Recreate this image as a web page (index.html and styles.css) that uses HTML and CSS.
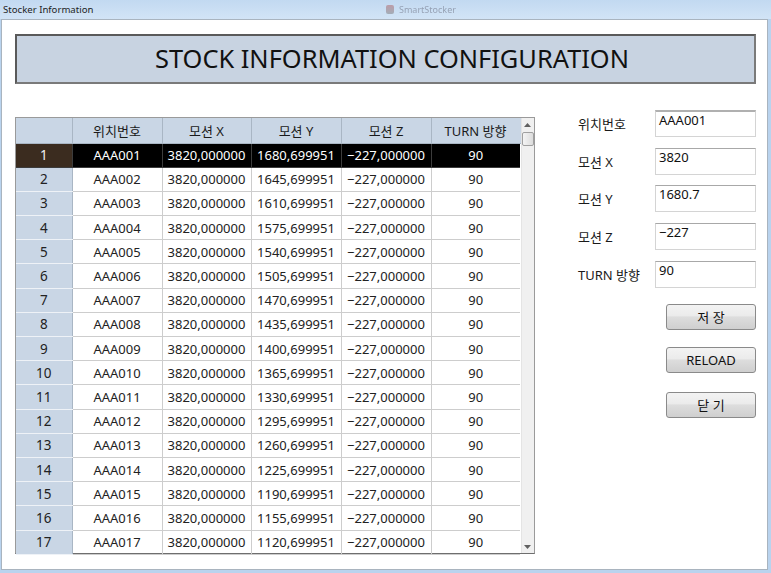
FILE: index.html
```html
<!DOCTYPE html>
<html>
<head>
<meta charset="utf-8">
<link rel="stylesheet" href="styles.css">
</head>
<body>
<div class="titlebar">
  <span class="title">Stocker Information</span>
  <span class="ghost"><span class="ghost-icon"></span><span class="ghost-text">SmartStocker</span></span>
</div>
<div class="window">
  <div class="banner">STOCK INFORMATION CONFIGURATION</div>
  <div class="content">
    <div class="grid-wrap">
      <table class="grid">
        <colgroup>
          <col class="c-rh"><col class="c1"><col class="c2"><col class="c3"><col class="c4"><col class="c5">
        </colgroup>
        <thead>
          <tr><th class="rh"></th><th>위치번호</th><th>모션 X</th><th>모션 Y</th><th>모션 Z</th><th>TURN 방향</th></tr>
        </thead>
        <tbody id="rows"></tbody>
      </table>
      <div class="scrollbar">
        <div class="sb-up"><svg width="7" height="4" viewBox="0 0 7 4"><path d="M0 4 L3.5 0 L7 4 Z" fill="#606060"/></svg></div>
        <div class="sb-thumb"></div>
        <div class="sb-track"></div>
        <div class="sb-down"><svg width="7" height="4" viewBox="0 0 7 4"><path d="M0 0 L3.5 4 L7 0 Z" fill="#606060"/></svg></div>
      </div>
    </div>
    <div class="side">
      <div class="form">
        <label>위치번호</label><div class="input first">AAA001</div>
        <label>모션 X</label><div class="input">3820</div>
        <label>모션 Y</label><div class="input">1680.7</div>
        <label>모션 Z</label><div class="input">−227</div>
        <label>TURN 방향</label><div class="input">90</div>
      </div>
      <div class="buttons">
        <button class="btn">저 장</button>
        <button class="btn">RELOAD</button>
        <button class="btn b3">닫 기</button>
      </div>
    </div>
  </div>
</div>
<script>
  var tb = document.getElementById('rows');
  var html = '';
  for (var i = 1; i <= 17; i++) {
    var n = ('00' + i).slice(-3);
    var y = (1715 - 35 * i) + ',699951';
    html += '<tr' + (i === 1 ? ' class="sel"' : '') + '><td class="rh">' + i + '</td><td>AAA' + n + '</td><td>3820,000000</td><td>' + y + '</td><td>\u2212227,000000</td><td>90</td></tr>';
  }
  tb.innerHTML = html;
</script>
</body>
</html>
```
FILE: styles.css
```css
* { box-sizing: border-box; }
html, body { margin: 0; padding: 0; }
body {
  width: 771px;
  height: 573px;
  overflow: hidden;
  background: #b9d3ee;
  font-family: "Noto Sans", "Noto Sans CJK KR", sans-serif;
  color: #1a1a1a;
}
.titlebar {
  height: 19px;
  display: flex;
  align-items: center;
  background: linear-gradient(to bottom, #c2d9f1, #d2e4f6);
  position: relative;
}
.title {
  font-size: 9.6px;
  color: #1e1e1e;
  padding-left: 3px;
  line-height: 1;
}
.ghost {
  position: absolute;
  left: 386px;
  top: 3px;
  display: flex;
  align-items: center;
  gap: 5px;
  opacity: 0.45;
}
.ghost-icon {
  width: 8px; height: 9px;
  background: linear-gradient(#b05050, #707070);
  border-radius: 2px;
}
.ghost-text { font-size: 9px; color: #556; filter: blur(0.6px); }

.window {
  margin-left: 1px;
  width: 767px;
  height: 551px;
  background: #ffffff;
  border: 1px solid #a9b4bf;
  padding: 14px 0 0 13px;
}
.banner {
  width: 741px;
  height: 50px;
  border: 2px solid #5a5a5a;
  border-right-color: #7a7a7a;
  border-bottom-color: #7a7a7a;
  background: #c8d3e1;
  display: flex;
  align-items: center;
  justify-content: center;
  font-size: 25.4px;
  color: #111;
  padding-left: 13px;
  padding-bottom: 2px;
}
.content {
  display: flex;
  margin-top: 26px;
}
.grid-wrap {
  margin-top: 7px;
  display: flex;
  width: 520px;
  height: 437px;
  border: 1px solid #9a9a9a;
  border-bottom-color: #6e6e6e;
}
.grid {
  border-collapse: collapse;
  table-layout: fixed;
  width: 504px;
  font-size: 13px;
}
.c-rh { width: 56px; }
.c1 { width: 90px; }
.c2 { width: 89px; }
.c3 { width: 90px; }
.c4 { width: 90px; }
.c5 { width: 89px; }
.grid th {
  height: 25px;
  font-weight: normal;
  background: #c9d6e5;
  border-right: 1px solid #a9b6c4;
  border-bottom: 1px solid #a9b6c4;
  padding: 0;
  text-align: center;
  font-size: 13px;
}
.grid th:last-child { border-right: 1px solid #c9d6e5; }
.grid td {
  height: 24.2px;
  padding: 0;
  text-align: center;
  border-right: 1px solid #cdcdcd;
  border-bottom: 1px solid #cdcdcd;
  white-space: nowrap;
  overflow: hidden;
  color: #222;
}
.grid td:last-child { border-right: none; }
.grid td.rh {
  background: #c9d6e5;
  border-right: 1px solid #a9b6c4;
  border-bottom: 1px solid #eef2f7;
  font-size: 13.5px;
}
.grid tr.sel td {
  background: #000000;
  color: #ffffff;
  border-color: #3c3c3c;
}
.grid tr.sel td.rh {
  background: #3b2c1f;
  color: #f0f0f0;
}
.scrollbar {
  width: 14px;
  display: flex;
  flex-direction: column;
  background: #f0f0f0;
  border-left: 1px solid #e4e4e4;
}
.sb-up, .sb-down {
  height: 13px;
  display: flex;
  align-items: center;
  justify-content: center;
}
.sb-thumb {
  height: 14px;
  margin: 1px 0 0 0;
  border: 1px solid #a0a0a0;
  border-radius: 2px;
  background: linear-gradient(to right, #f4f4f4, #dcdcdc);
}
.sb-track { flex: 1; }

.side {
  margin-left: 43px;
  display: flex;
  flex-direction: column;
}
.form {
  display: grid;
  grid-template-columns: 77px 101px;
  grid-auto-rows: 27px;
  row-gap: 10.7px;
  align-items: center;
}
.form label {
  font-size: 13px;
  color: #1a1a1a;
}
.input {
  height: 27px;
  border: 1px solid #d4d4d4;
  border-top-color: #a8a8a8;
  font-size: 13px;
  padding: 0 0 0 3px;
  line-height: 16px;
  color: #111;
  align-self: stretch;
}
.input.first { border-top: 2px solid #b0b0b0; padding-top: 0; }
.buttons {
  margin-top: 16px;
  display: flex;
  flex-direction: column;
  align-items: flex-end;
  gap: 17px;
}
.btn {
  width: 90px;
  height: 26px;
  border: 1px solid #8a8a8a;
  border-radius: 3px;
  background: linear-gradient(to bottom, #f3f3f3 0%, #ebebeb 45%, #dddddd 50%, #cfcfcf 100%);
  font-family: "Noto Sans", "Noto Sans CJK KR", sans-serif;
  font-size: 13px;
  color: #111;
  padding: 0;
}
.btn.b3 { margin-top: 2px; }
```
